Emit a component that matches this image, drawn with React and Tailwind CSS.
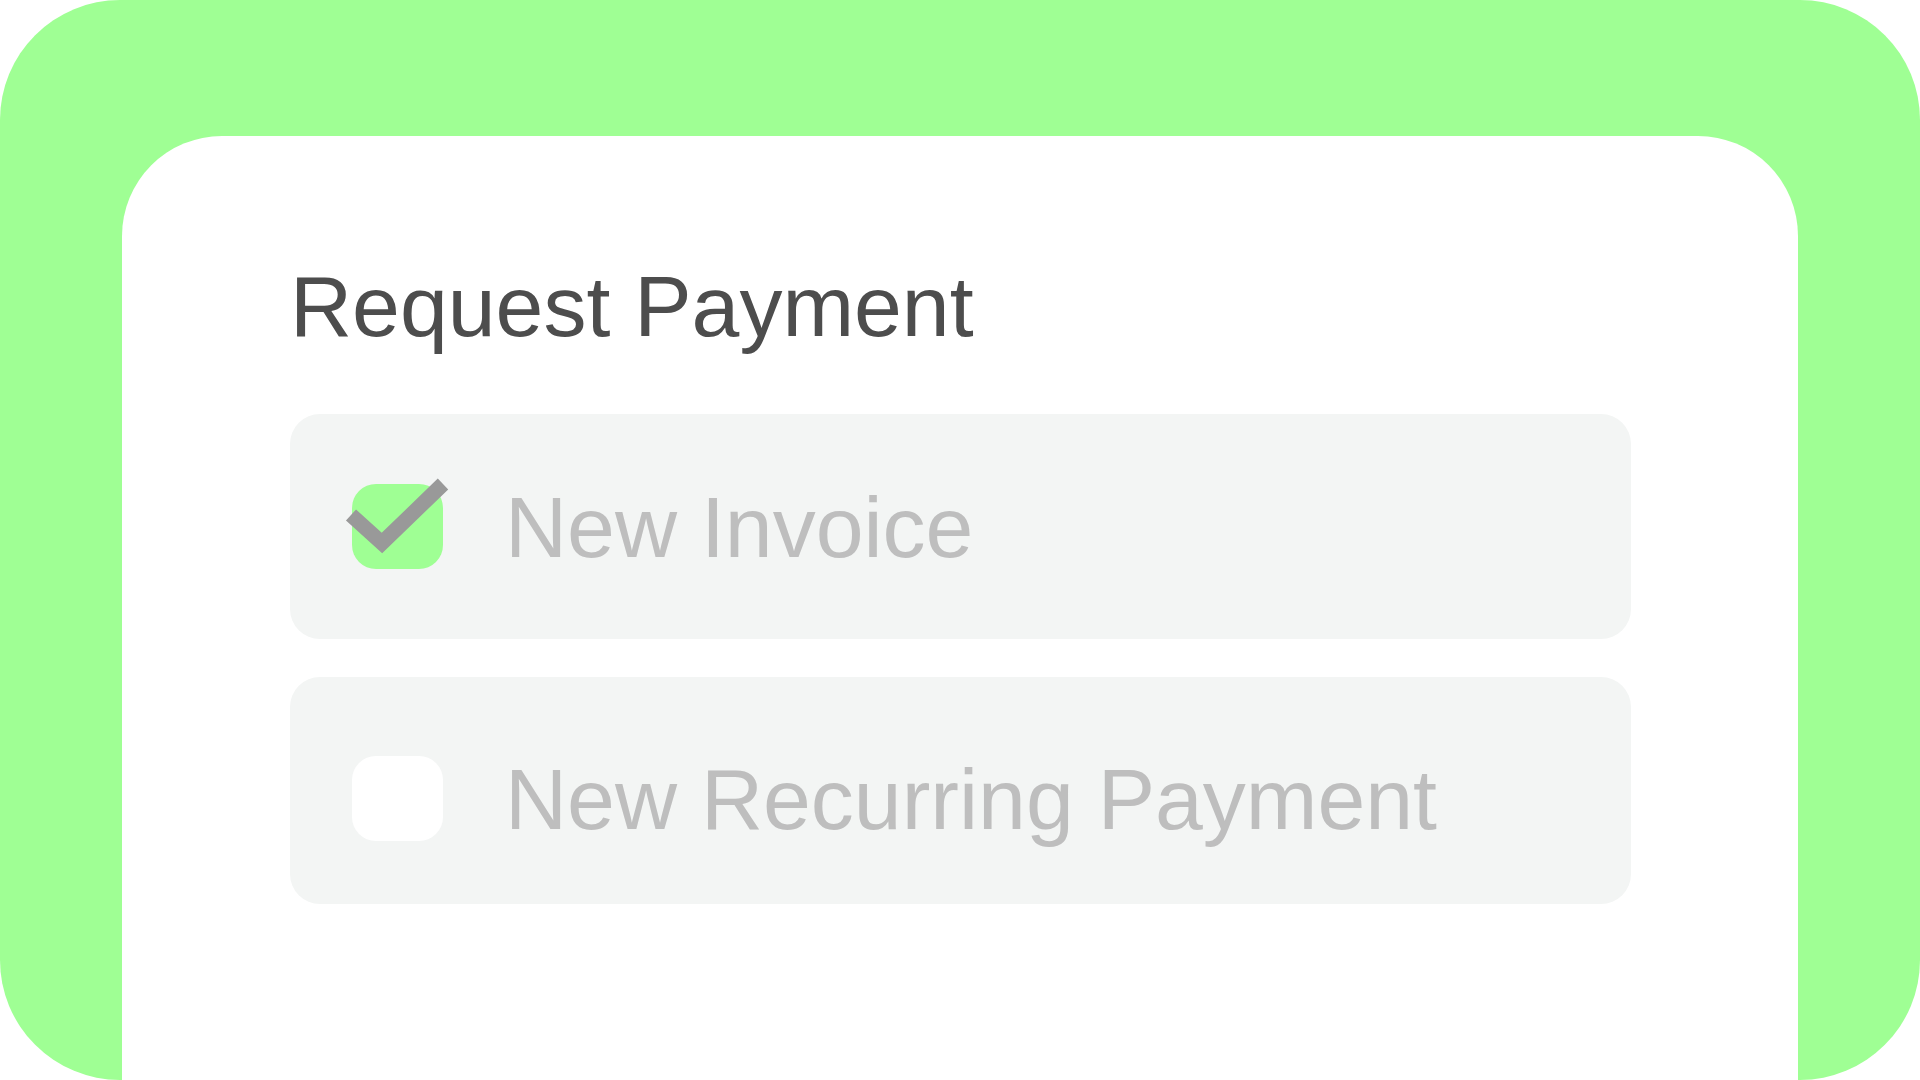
const options = [
  { label: 'New Invoice', checked: true, extra: '' },
  { label: 'New Recurring Payment', checked: false, extra: 'pt-[16px]' },
];

const CheckMark = () => (
  <svg
    className="absolute left-[-12px] top-[-12px]"
    width="120"
    height="100"
    viewBox="0 0 120 100"
    fill="none"
  >
    <path
      d="M11 43 L42 71 L103 12"
      stroke="#999999"
      strokeWidth="15"
      strokeLinejoin="miter"
      strokeLinecap="butt"
    />
  </svg>
);

const OptionRow = ({ label, checked, extra, height }) => (
  <div className={`flex items-center ${height} ${extra} rounded-[30px] bg-[#f3f5f4] pl-[62px]`}>
    <div
      className={`relative w-[91px] h-[85px] shrink-0 rounded-[24px] ${checked ? 'bg-[#9fff94]' : 'bg-white'}`}
    >
      {checked && <CheckMark />}
    </div>
    <span className="ml-[62px] text-[86px] leading-none text-[#bebebe] font-['Liberation_Sans',Arial,sans-serif]">
      {label}
    </span>
  </div>
);

export default function App() {
  return (
    <div className="w-[1920px] h-[1080px] overflow-hidden bg-white">
      <div className="w-full h-full rounded-[120px] bg-[#9fff94] pt-[136px] px-[122px] overflow-hidden">
        <div className="h-[1100px] rounded-t-[100px] bg-white pt-[127px] pl-[168px] pr-[167px]">
          <h1 className="text-[86px] leading-none text-[#4d4d4d] font-['Liberation_Sans',Arial,sans-serif]">
            Request Payment
          </h1>
          <div className="mt-[65px] flex flex-col gap-[38px]">
            <OptionRow {...options[0]} height="h-[225px]" />
            <OptionRow {...options[1]} height="h-[227px]" />
          </div>
        </div>
      </div>
    </div>
  );
}
